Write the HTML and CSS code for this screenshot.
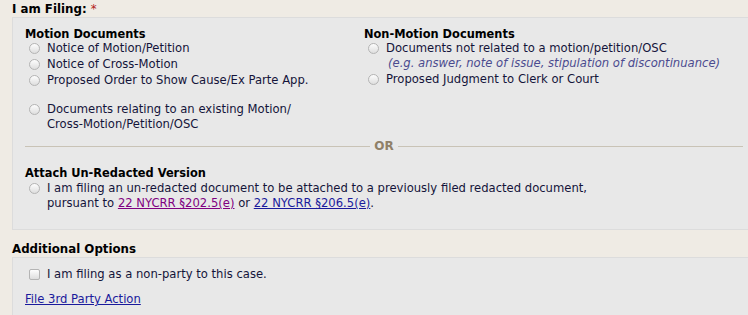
FILE: index.html
```html
<!DOCTYPE html>
<html lang="en">
<head>
    <meta charset="UTF-8">
    <title>I am Filing</title>
    <link rel="stylesheet" href="styles.css">
</head>
<body>
    <div class="field-label">I am Filing: <span class="req">*</span></div>
    <div class="panel">
        <div class="cols">
            <div class="col">
                <h4>Motion Documents</h4>
                <label class="opt"><input type="radio" name="doc"><span>Notice of Motion/Petition</span></label>
                <label class="opt"><input type="radio" name="doc"><span>Notice of Cross-Motion</span></label>
                <label class="opt"><input type="radio" name="doc"><span>Proposed Order to Show Cause/Ex Parte App.</span></label>
                <label class="opt opt-gap"><input type="radio" name="doc"><span>Documents relating to an existing Motion/<br>Cross-Motion/Petition/OSC</span></label>
            </div>
            <div class="col">
                <h4>Non-Motion Documents</h4>
                <label class="opt"><input type="radio" name="doc"><span>Documents not related to a motion/petition/OSC<br><em class="hint">(e.g. answer, note of issue, stipulation of discontinuance)</em></span></label>
                <label class="opt"><input type="radio" name="doc"><span>Proposed Judgment to Clerk or Court</span></label>
            </div>
        </div>

        <div class="or-sep"><span class="line"></span><span class="or">OR</span><span class="line"></span></div>

        <h4>Attach Un-Redacted Version</h4>
        <label class="opt opt-redacted"><input type="radio" name="doc"><span>I am filing an un-redacted document to be attached to a previously filed redacted document,<br>pursuant to <a href="#" class="visited">22 NYCRR §202.5(e)</a> or <a href="#">22 NYCRR §206.5(e)</a>.</span></label>
    </div>

    <div class="field-label section">Additional Options</div>
    <div class="panel panel-bottom">
        <label class="opt"><input type="checkbox"><span>I am filing as a non-party to this case.</span></label>
        <a href="#" class="third-party">File 3rd Party Action</a>
    </div>
</body>
</html>
```

FILE: styles.css
```css
body {
    margin: 0;
    background: #efebe4;
    font-family: "DejaVu Sans", Verdana, sans-serif;
    font-size: 11.6px;
    color: #14143a;
}
.field-label {
    font-weight: bold;
    font-size: 11.8px;
    color: #000;
    padding: 2px 12px 0;
    height: 15px;
}
.req {
    color: #b22222;
    font-weight: normal;
}
.panel {
    margin-left: 12px;
    background: #e8e8e8;
    border-top: 1px solid #dcdcdc;
    border-bottom: 1px solid #dcdcdc;
    border-left: 1px solid #dcdcdc;
    padding: 9px 5px 17px 12px;
}
.cols {
    display: grid;
    grid-template-columns: 339px 1fr;
}
h4 {
    margin: 0;
    font-size: 11.4px;
    color: #000;
    line-height: 14px;
}
.opt {
    display: flex;
    align-items: flex-start;
    line-height: 15px;
    margin-bottom: 1px;
}
.opt-gap {
    margin-top: 14px;
}
.opt-redacted {
    margin-top: 1px;
}
.opt input {
    appearance: none;
    width: 11px;
    height: 11px;
    margin: 2px 7px 0 4px;
    border: 1px solid #b4b4b4;
    border-radius: 50%;
    background: linear-gradient(#fdfdfd, #dedede);
    flex: none;
}
.opt input[type=checkbox] {
    border-radius: 2px;
}
.hint {
    color: #4b4b8f;
    margin-left: 2px;
}
.or-sep {
    display: flex;
    align-items: center;
    gap: 4px;
    margin: 6px 0 13px;
}
.or-sep .line {
    flex: 1;
    border-top: 1px solid #c9c3b6;
}
.or {
    color: #8f8068;
    font-weight: bold;
    font-size: 12px;
}
a {
    color: #1a1a9c;
}
a.visited {
    color: #800080;
}
.section {
    padding-top: 12px;
    height: 15px;
}
.panel-bottom {
    padding-top: 9px;
    padding-bottom: 0;
    height: 48px;
}
.third-party {
    display: inline-block;
    margin-top: 9px;
}
```
